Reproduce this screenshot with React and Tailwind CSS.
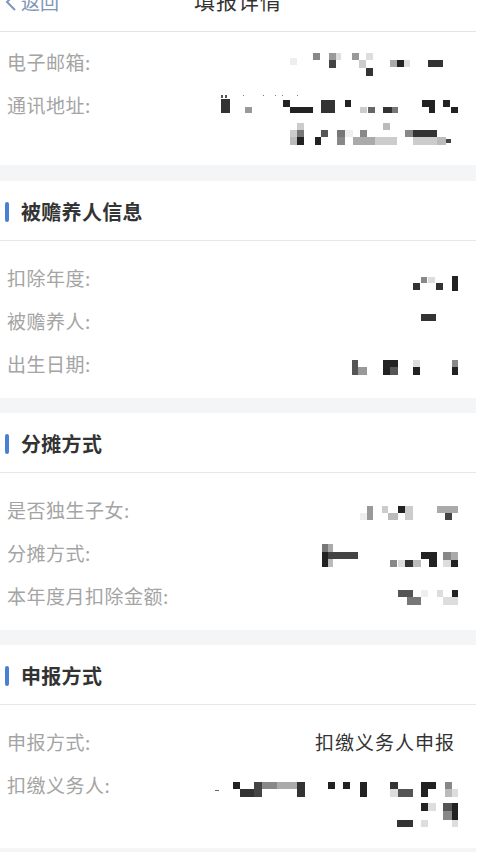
import React from 'react';

const FONT = { fontFamily: '"Noto Sans CJK SC", "Noto Sans", sans-serif' };

// redaction mosaics, rects in page coordinates: [x, y, w, h, colour]
const MOSAIC = {
  email: [
    [290, 58, 7, 7, '#eee'], [313, 53, 7, 7, '#888'], [329, 53, 7, 7, '#999'], [329, 60, 7, 8, '#444'],
    [336, 53, 5, 7, '#ddd'], [352, 53, 7, 7, '#999'], [359, 60, 7, 8, '#ccc'], [366, 53, 7, 7, '#ddd'],
    [366, 68, 7, 8, '#333'], [390, 60, 7, 7, '#aaa'], [397, 60, 7, 7, '#222'], [404, 60, 6, 7, '#ddd'],
    [428, 60, 15, 7, '#333'],
  ],
  address: [
    [221, 95, 2, 3, '#555'], [225, 95, 2, 3, '#555'], [221, 99, 9, 14, '#333'], [245, 107, 7, 6, '#999'],
    [243, 95, 1, 1, '#777'], [263, 95, 1, 1, '#777'], [275, 95, 1, 1, '#777'], [282, 95, 1, 1, '#777'], [297, 95, 1, 1, '#777'],
    [283, 100, 7, 7, '#222'], [290, 107, 23, 6, '#222'], [321, 100, 14, 13, '#333'], [345, 100, 6, 7, '#222'],
    [360, 107, 7, 6, '#ccc'], [368, 107, 7, 6, '#666'], [383, 107, 9, 6, '#333'], [392, 107, 6, 6, '#777'],
    [422, 100, 13, 7, '#222'], [429, 107, 6, 6, '#222'], [443, 100, 7, 7, '#222'], [451, 107, 7, 6, '#222'],
    [290, 130, 7, 7, '#ccc'], [297, 123, 7, 7, '#ccc'], [297, 130, 7, 7, '#777'], [297, 137, 7, 8, '#222'],
    [290, 137, 7, 8, '#bbb'], [315, 137, 6, 8, '#222'], [321, 130, 7, 7, '#555'], [337, 130, 8, 7, '#777'],
    [337, 137, 8, 8, '#888'], [345, 130, 8, 7, '#eee'], [353, 137, 22, 8, '#aaa'], [360, 130, 7, 7, '#888'],
    [375, 137, 22, 8, '#ccc'], [383, 123, 7, 7, '#bbb'], [405, 130, 8, 7, '#888'], [413, 130, 24, 7, '#333'],
    [413, 137, 24, 8, '#ccc'], [437, 137, 9, 8, '#bbb'], [446, 139, 5, 4, '#444'],
  ],
  year: [
    [413, 283, 7, 7, '#333'], [421, 277, 6, 6, '#888'], [428, 277, 7, 6, '#ddd'], [436, 283, 7, 7, '#333'],
    [452, 276, 6, 15, '#222'],
  ],
  person: [[421, 314, 15, 7, '#333']],
  birth: [
    [352, 360, 6, 15, '#555'], [358, 367, 9, 8, '#999'], [383, 360, 15, 15, '#222'], [390, 367, 8, 8, '#555'],
    [413, 360, 7, 7, '#ddd'], [413, 367, 7, 8, '#222'], [452, 360, 6, 7, '#888'], [452, 367, 6, 8, '#222'],
  ],
  only: [
    [360, 513, 7, 7, '#eee'], [367, 506, 6, 14, '#999'], [382, 506, 6, 7, '#ccc'], [388, 513, 10, 7, '#bbb'],
    [398, 506, 7, 7, '#222'], [405, 506, 8, 14, '#ccc'], [437, 506, 21, 7, '#aaa'], [445, 513, 7, 7, '#444'],
  ],
  split: [
    [322, 544, 6, 8, '#777'], [322, 552, 6, 15, '#222'], [328, 544, 5, 8, '#aaa'], [328, 552, 30, 7, '#444'],
    [328, 559, 5, 8, '#bbb'], [390, 560, 7, 7, '#888'], [398, 560, 7, 7, '#ddd'], [405, 560, 8, 7, '#333'],
    [413, 560, 8, 7, '#bbb'], [421, 552, 16, 7, '#222'], [429, 559, 8, 8, '#222'], [443, 552, 8, 8, '#888'],
    [451, 552, 7, 8, '#aaa'], [451, 560, 7, 7, '#222'], [443, 560, 8, 7, '#ddd'],
  ],
  amount: [
    [398, 590, 15, 7, '#555'], [407, 597, 14, 8, '#777'], [421, 590, 7, 7, '#eee'], [437, 590, 6, 7, '#ddd'],
    [452, 590, 6, 7, '#222'], [443, 597, 15, 8, '#ddd'],
  ],
  agent: [
    [215, 790, 4, 1, '#666'], [233, 782, 7, 7, '#222'], [240, 789, 14, 8, '#333'], [254, 782, 8, 15, '#444'],
    [262, 782, 15, 7, '#888'], [277, 782, 20, 7, '#aaa'], [297, 782, 8, 15, '#333'], [328, 782, 7, 7, '#222'],
    [343, 782, 7, 7, '#222'], [360, 782, 7, 15, '#222'], [390, 782, 8, 7, '#333'], [390, 789, 8, 8, '#ddd'],
    [398, 789, 15, 8, '#555'], [421, 782, 7, 15, '#222'], [428, 782, 8, 7, '#222'], [445, 782, 7, 7, '#888'],
    [445, 789, 7, 8, '#bbb'], [452, 789, 6, 8, '#ddd'],
    [421, 803, 7, 8, '#222'], [428, 803, 8, 8, '#ddd'], [443, 803, 9, 8, '#555'], [452, 803, 6, 17, '#222'],
    [443, 811, 9, 9, '#888'], [397, 820, 16, 7, '#333'], [421, 820, 7, 7, '#ddd'], [452, 820, 6, 7, '#ddd'],
  ],
};

const Mosaic = ({ name, top, h }) => (
  <svg width="276" height={h} viewBox={`200 ${top} 276 ${h}`} className="absolute right-0 top-0">
    {MOSAIC[name].map(([x, y, w, hh, c], i) => (
      <rect key={i} x={x} y={y} width={w} height={hh} fill={c} />
    ))}
  </svg>
);

const Row = ({ label, top, h = 43, mosaic, value }) => (
  <div className="relative flex items-start" style={{ height: h }}>
    <div className="h-[43px] flex items-center pl-[7px] text-[19px] tracking-[0.5px] text-[#a4a4a4]">{label}</div>
    {mosaic && <Mosaic name={mosaic} top={top} h={h} />}
    {value && (
      <div className="ml-auto h-[43px] flex items-center pr-[21px] text-[19px] tracking-[1px] text-[#333]">{value}</div>
    )}
  </div>
);

const SectionHead = ({ title }) => (
  <div className="h-[60px] flex items-center gap-[12px] pl-[5px] pt-[2px] border-b border-[#e6e7ea]">
    <span className="w-[4px] h-[20px] rounded-full bg-[#4a7fd4]" />
    <span className="text-[20px] font-bold text-[#333] tracking-[0.3px]">{title}</span>
  </div>
);

const Gap = ({ h }) => <div className="bg-[#f4f5f7]" style={{ height: h }} />;

export default function App() {
  return (
    <div className="w-[482px] h-[852px] bg-white overflow-hidden" style={FONT}>
      <div className="w-[476px]">
        {/* nav bar */}
        <div className="relative h-[32px] border-b border-[#e3e4e6]">
          <div className="absolute left-[3px] top-[-12px] flex items-center text-[19px] text-[#7e97b8]">
            <svg width="16" height="22" viewBox="0 0 16 22" className="mr-[2px]">
              <path d="M12 3 L4 11 L12 19" fill="none" stroke="#7e97b8" strokeWidth="2" />
            </svg>
            返回
          </div>
          <div className="absolute left-0 right-0 top-[-15px] text-center text-[21px] text-[#333] tracking-[1px]">填报详情</div>
        </div>

        <div className="pt-[9px]">
          <Row label="电子邮箱:" top={41} mosaic="email" />
          <Row label="通讯地址:" top={84} h={81} mosaic="address" />
        </div>
        <Gap h={16} />

        <SectionHead title="被赡养人信息" />
        <div className="pt-[16px] pb-[12px]">
          <Row label="扣除年度:" top={257} mosaic="year" />
          <Row label="被赡养人:" top={300} mosaic="person" />
          <Row label="出生日期:" top={343} mosaic="birth" />
        </div>
        <Gap h={15} />

        <SectionHead title="分摊方式" />
        <div className="pt-[16px] pb-[12px]">
          <Row label="是否独生子女:" top={489} mosaic="only" />
          <Row label="分摊方式:" top={532} mosaic="split" />
          <Row label="本年度月扣除金额:" top={575} mosaic="amount" />
        </div>
        <Gap h={15} />

        <SectionHead title="申报方式" />
        <div className="pt-[16px] pb-[4px]">
          <Row label="申报方式:" top={721} value="扣缴义务人申报" />
          <Row label="扣缴义务人:" top={764} h={80} mosaic="agent" />
        </div>
        <Gap h={20} />
      </div>
    </div>
  );
}
